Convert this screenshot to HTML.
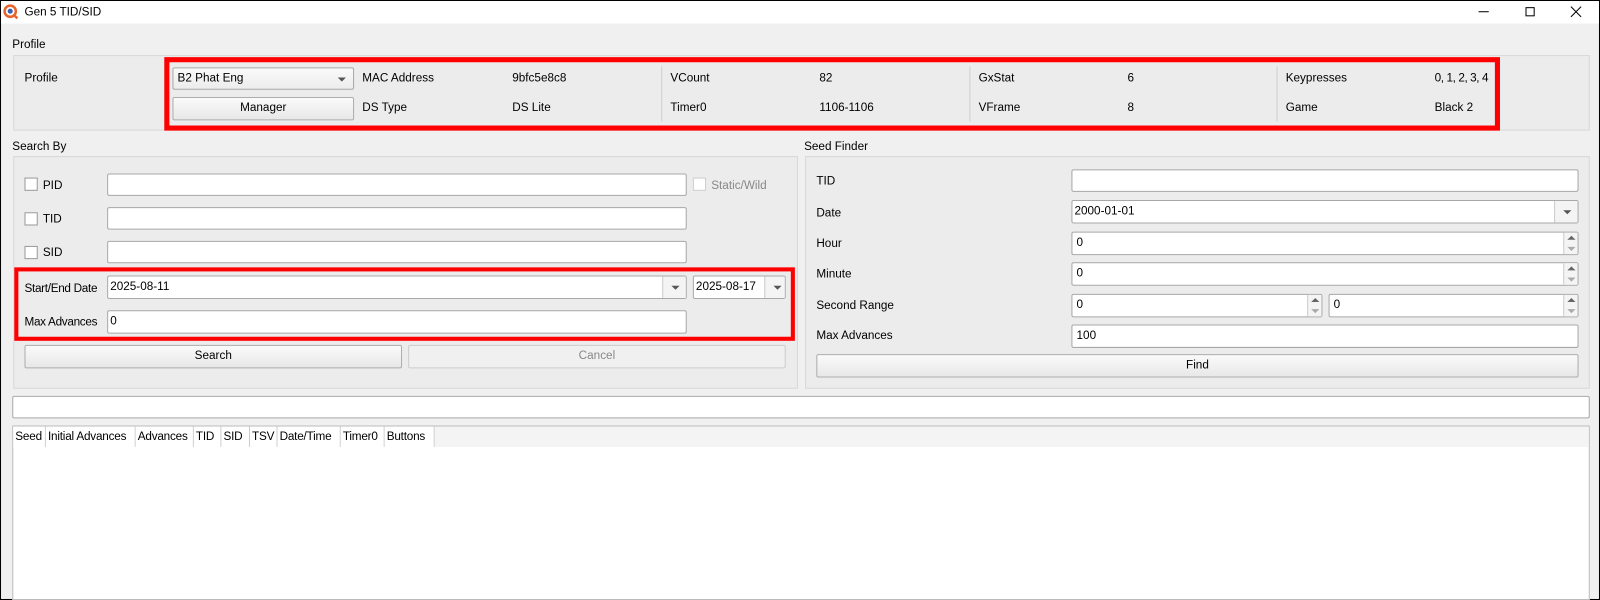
<!DOCTYPE html>
<html><head><meta charset="utf-8"><style>
*{box-sizing:border-box;margin:0;padding:0}
body{width:1600px;height:600px;overflow:hidden;background:#fff;font-family:"Liberation Sans",sans-serif;font-size:11.5px;color:#000}
#w{position:absolute;left:0;top:0;width:1568px;height:588px;transform:scale(1.0204);transform-origin:0 0;background:#f0f0f0;border:1px solid #000}
.a{position:absolute;white-space:nowrap}
.t{position:absolute;line-height:14px;white-space:nowrap}
.in{position:absolute;background:#fff;border:1px solid #a8a8a8;border-radius:2px;padding-left:4px;line-height:20px}
.btn{position:absolute;background:linear-gradient(#fafafa,#e8e8e8);border:1px solid #adadad;border-radius:2px;text-align:center;line-height:20px}
.grp{position:absolute;border:1px solid #d8d8d8;background:#ececec}
.cb{position:absolute;width:13px;height:13px;background:#fff;border:1px solid #999}
.red{position:absolute;border:5px solid #f00}
.sep{position:absolute;width:1px;background:#cfcfcf;top:64px;height:54px}
.dd{position:absolute;right:0;top:0;bottom:0;width:23px;border-left:1px solid #ccc;background:#f4f4f4}
.dd:after{content:"";position:absolute;left:8px;top:9px;border:4px solid transparent;border-top:4px solid #555}
.sp{position:absolute;right:0;top:0;bottom:0;width:14px;border-left:1px solid #ccc;background:#f4f4f4}
.sp:before{content:"";position:absolute;left:3px;top:3px;border:4px solid transparent;border-bottom:4px solid #666;border-top:0}
.sp:after{content:"";position:absolute;left:3px;bottom:3px;border:4px solid transparent;border-top:4px solid #aaa;border-bottom:0}
.th{position:absolute;top:0;height:20px;line-height:20px;border-right:1px solid #ccc;padding-left:2px;background:#fff;letter-spacing:-0.2px}
</style></head><body><div id="w">
<div class="a" style="left:0;top:0;width:1566px;height:22px;background:#fff"></div>
<svg class="a" style="left:2px;top:3px" width="16" height="16"><circle cx="7" cy="7" r="5.5" fill="none" stroke="#e8642c" stroke-width="2.5"/><circle cx="7" cy="7" r="2.5" fill="#3a5fb0"/><line x1="10" y1="10" x2="14" y2="14" stroke="#e8642c" stroke-width="2.5"/></svg>
<div class="t" style="left:23px;top:4px">Gen 5 TID/SID</div>
<div class="a" style="left:1448px;top:10px;width:10px;height:1px;background:#000"></div>
<div class="a" style="left:1494px;top:6px;width:9px;height:9px;border:1px solid #000"></div>
<svg class="a" style="left:1538px;top:5px" width="11" height="11"><path d="M0.5 0.5L10.5 10.5M10.5 0.5L0.5 10.5" stroke="#000" stroke-width="1"/></svg>

<div class="t" style="left:11px;top:36px">Profile</div>
<div class="grp" style="left:12px;top:53px;width:1545px;height:74px"></div>
<div class="t" style="left:23px;top:69px">Profile</div>
<div class="in" style="left:168px;top:65px;width:178px;height:22px;line-height:20px;background:linear-gradient(#fafafa,#ececec)">B2 Phat Eng<div class="dd" style="border:0;background:none"></div></div>
<div class="btn" style="left:168px;top:94px;width:178px;height:23px">Manager</div>
<div class="t" style="left:354px;top:69px">MAC Address</div><div class="t" style="left:501px;top:69px">9bfc5e8c8</div>
<div class="t" style="left:354px;top:98px">DS Type</div><div class="t" style="left:501px;top:98px">DS Lite</div>
<div class="sep" style="left:647px"></div><div class="sep" style="left:949px"></div><div class="sep" style="left:1250px"></div>
<div class="t" style="left:656px;top:69px">VCount</div><div class="t" style="left:802px;top:69px">82</div>
<div class="t" style="left:656px;top:98px">Timer0</div><div class="t" style="left:802px;top:98px">1106-1106</div>
<div class="t" style="left:958px;top:69px">GxStat</div><div class="t" style="left:1104px;top:69px">6</div>
<div class="t" style="left:958px;top:98px">VFrame</div><div class="t" style="left:1104px;top:98px">8</div>
<div class="t" style="left:1259px;top:69px">Keypresses</div><div class="t" style="left:1405px;top:69px;letter-spacing:-0.4px">0, 1, 2, 3, 4</div>
<div class="t" style="left:1259px;top:98px">Game</div><div class="t" style="left:1405px;top:98px">Black 2</div>
<div class="red" style="left:160px;top:55px;width:1309px;height:72px"></div>

<div class="t" style="left:11px;top:136px">Search By</div>
<div class="grp" style="left:12px;top:152px;width:769px;height:228px"></div>
<div class="cb" style="left:23px;top:173px"></div><div class="t" style="left:41px;top:174px">PID</div>
<div class="in" style="left:104px;top:169px;width:568px;height:22px"></div>
<div class="cb" style="left:678px;top:173px;border-color:#ccc"></div><div class="t" style="left:696px;top:174px;color:#888">Static/Wild</div>
<div class="cb" style="left:23px;top:207px"></div><div class="t" style="left:41px;top:207px">TID</div>
<div class="in" style="left:104px;top:202px;width:568px;height:22px"></div>
<div class="cb" style="left:23px;top:240px"></div><div class="t" style="left:41px;top:240px">SID</div>
<div class="in" style="left:104px;top:235px;width:568px;height:22px"></div>
<div class="t" style="left:23px;top:275px;letter-spacing:-0.3px">Start/End Date</div>
<div class="in" style="left:104px;top:269px;width:568px;height:23px;padding-left:2px">2025-08-11<div class="dd"></div></div>
<div class="in" style="left:678px;top:269px;width:91px;height:23px;padding-left:2px">2025-08-17<div class="dd" style="width:20px"></div></div>
<div class="t" style="left:23px;top:308px;letter-spacing:-0.3px">Max Advances</div>
<div class="in" style="left:104px;top:303px;width:568px;height:23px;padding-left:2px">0</div>
<div class="red" style="left:13px;top:261px;width:765px;height:72px;border-width:4px"></div>
<div class="btn" style="left:23px;top:337px;width:370px;height:23px">Search</div>
<div class="btn" style="left:399px;top:337px;width:370px;height:23px;color:#888;background:#f0f0f0;border-color:#ccc">Cancel</div>

<div class="t" style="left:787px;top:136px">Seed Finder</div>
<div class="grp" style="left:788px;top:152px;width:769px;height:228px"></div>
<div class="t" style="left:799px;top:170px">TID</div><div class="in" style="left:1049px;top:165px;width:497px;height:22px"></div>
<div class="t" style="left:799px;top:201px">Date</div><div class="in" style="left:1049px;top:195px;width:497px;height:23px;padding-left:2px">2000-01-01<div class="dd"></div></div>
<div class="t" style="left:799px;top:231px">Hour</div><div class="in" style="left:1049px;top:226px;width:497px;height:23px">0<div class="sp"></div></div>
<div class="t" style="left:799px;top:261px">Minute</div><div class="in" style="left:1049px;top:256px;width:497px;height:23px">0<div class="sp"></div></div>
<div class="t" style="left:799px;top:292px">Second Range</div><div class="in" style="left:1049px;top:287px;width:246px;height:23px">0<div class="sp"></div></div><div class="in" style="left:1301px;top:287px;width:245px;height:23px">0<div class="sp"></div></div>
<div class="t" style="left:799px;top:321px">Max Advances</div><div class="in" style="left:1049px;top:317px;width:497px;height:23px">100</div>
<div class="btn" style="left:799px;top:346px;width:747px;height:23px">Find</div>

<div class="in" style="left:11px;top:387px;width:1546px;height:22px"></div>
<div class="a" style="left:11px;top:416px;width:1546px;height:171px;background:#fff;border:1px solid #bbb">
<div class="th" style="left:0;width:32px">Seed</div>
<div class="th" style="left:32px;width:88px">Initial Advances</div>
<div class="th" style="left:120px;width:57px">Advances</div>
<div class="th" style="left:177px;width:27px">TID</div>
<div class="th" style="left:204px;width:28px">SID</div>
<div class="th" style="left:232px;width:27px">TSV</div>
<div class="th" style="left:259px;width:62px">Date/Time</div>
<div class="th" style="left:321px;width:43px">Timer0</div>
<div class="th" style="left:364px;width:49px">Buttons</div>
<div class="a" style="left:413px;top:0;width:1131px;height:20px;background:#f4f4f4"></div>
</div>
</div></body></html>
